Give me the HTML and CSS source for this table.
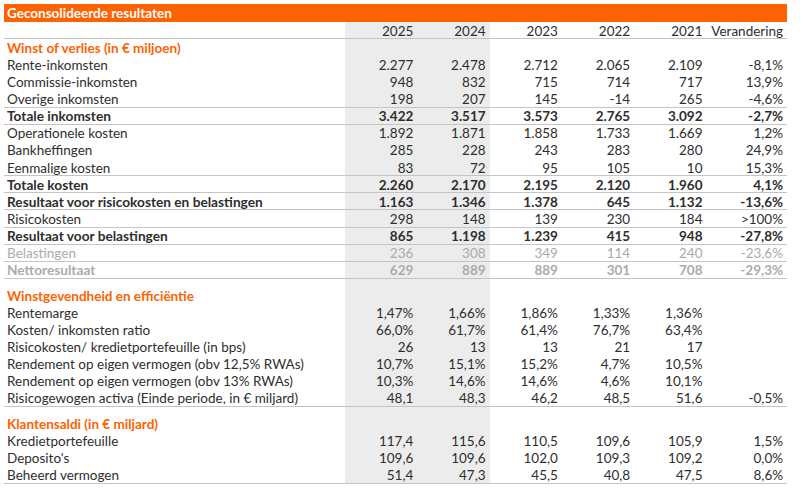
FILE: index.html
```html
<!DOCTYPE html>
<html lang="nl">
<head>
<meta charset="utf-8">
<title>Geconsolideerde resultaten</title>
<link rel="stylesheet" href="styles.css">
</head>
<body>
<div class="page">
<table class="results">
  <colgroup>
    <col class="c-label">
    <col class="c-num"><col class="c-num"><col class="c-num"><col class="c-num"><col class="c-num">
    <col class="c-chg">
  </colgroup>
  <thead>
    <tr class="title-row"><th colspan="7">Geconsolideerde resultaten</th></tr>
    <tr class="year-row line">
      <th></th><th class="hl">2025</th><th class="hl">2024</th><th>2023</th><th>2022</th><th>2021</th><th>Verandering</th>
    </tr>
  </thead>
  <tbody>
    <tr class="section"><td>Winst of verlies (in € miljoen)</td><td class="hl"></td><td class="hl"></td><td></td><td></td><td></td><td></td></tr>
    <tr><td>Rente-inkomsten</td><td class="hl">2.277</td><td class="hl">2.478</td><td>2.712</td><td>2.065</td><td>2.109</td><td>-8,1%</td></tr>
    <tr><td>Commissie-inkomsten</td><td class="hl">948</td><td class="hl">832</td><td>715</td><td>714</td><td>717</td><td>13,9%</td></tr>
    <tr class="line"><td>Overige inkomsten</td><td class="hl">198</td><td class="hl">207</td><td>145</td><td>-14</td><td>265</td><td>-4,6%</td></tr>
    <tr class="line total"><td>Totale inkomsten</td><td class="hl">3.422</td><td class="hl">3.517</td><td>3.573</td><td>2.765</td><td>3.092</td><td>-2,7%</td></tr>
    <tr><td>Operationele kosten</td><td class="hl">1.892</td><td class="hl">1.871</td><td>1.858</td><td>1.733</td><td>1.669</td><td>1,2%</td></tr>
    <tr><td>Bankheffingen</td><td class="hl">285</td><td class="hl">228</td><td>243</td><td>283</td><td>280</td><td>24,9%</td></tr>
    <tr class="line"><td>Eenmalige kosten</td><td class="hl">83</td><td class="hl">72</td><td>95</td><td>105</td><td>10</td><td>15,3%</td></tr>
    <tr class="line total"><td>Totale kosten</td><td class="hl">2.260</td><td class="hl">2.170</td><td>2.195</td><td>2.120</td><td>1.960</td><td>4,1%</td></tr>
    <tr class="line total"><td>Resultaat voor risicokosten en belastingen</td><td class="hl">1.163</td><td class="hl">1.346</td><td>1.378</td><td>645</td><td>1.132</td><td>-13,6%</td></tr>
    <tr class="line"><td>Risicokosten</td><td class="hl">298</td><td class="hl">148</td><td>139</td><td>230</td><td>184</td><td>&gt;100%</td></tr>
    <tr class="line total"><td>Resultaat voor belastingen</td><td class="hl">865</td><td class="hl">1.198</td><td>1.239</td><td>415</td><td>948</td><td>-27,8%</td></tr>
    <tr class="line muted"><td>Belastingen</td><td class="hl">236</td><td class="hl">308</td><td>349</td><td>114</td><td>240</td><td>-23,6%</td></tr>
    <tr class="line muted total"><td>Nettoresultaat</td><td class="hl">629</td><td class="hl">889</td><td>889</td><td>301</td><td>708</td><td>-29,3%</td></tr>
    <tr class="gap"><td></td><td class="hl"></td><td class="hl"></td><td></td><td></td><td></td><td></td></tr>
    <tr class="section"><td>Winstgevendheid en efficiëntie</td><td class="hl"></td><td class="hl"></td><td></td><td></td><td></td><td></td></tr>
    <tr><td>Rentemarge</td><td class="hl">1,47%</td><td class="hl">1,66%</td><td>1,86%</td><td>1,33%</td><td>1,36%</td><td></td></tr>
    <tr><td>Kosten/ inkomsten ratio</td><td class="hl">66,0%</td><td class="hl">61,7%</td><td>61,4%</td><td>76,7%</td><td>63,4%</td><td></td></tr>
    <tr><td>Risicokosten/ kredietportefeuille (in bps)</td><td class="hl">26</td><td class="hl">13</td><td>13</td><td>21</td><td>17</td><td></td></tr>
    <tr><td>Rendement op eigen vermogen (obv 12,5% RWAs)</td><td class="hl">10,7%</td><td class="hl">15,1%</td><td>15,2%</td><td>4,7%</td><td>10,5%</td><td></td></tr>
    <tr><td>Rendement op eigen vermogen (obv 13% RWAs)</td><td class="hl">10,3%</td><td class="hl">14,6%</td><td>14,6%</td><td>4,6%</td><td>10,1%</td><td></td></tr>
    <tr class="line"><td>Risicogewogen activa (Einde periode, in € miljard)</td><td class="hl">48,1</td><td class="hl">48,3</td><td>46,2</td><td>48,5</td><td>51,6</td><td>-0,5%</td></tr>
    <tr class="gap"><td></td><td class="hl"></td><td class="hl"></td><td></td><td></td><td></td><td></td></tr>
    <tr class="section"><td>Klantensaldi (in € miljard)</td><td class="hl"></td><td class="hl"></td><td></td><td></td><td></td><td></td></tr>
    <tr><td>Kredietportefeuille</td><td class="hl">117,4</td><td class="hl">115,6</td><td>110,5</td><td>109,6</td><td>105,9</td><td>1,5%</td></tr>
    <tr><td>Deposito's</td><td class="hl">109,6</td><td class="hl">109,6</td><td>102,0</td><td>109,3</td><td>109,2</td><td>0,0%</td></tr>
    <tr class="line"><td>Beheerd vermogen</td><td class="hl">51,4</td><td class="hl">47,3</td><td>45,5</td><td>40,8</td><td>47,5</td><td>8,6%</td></tr>
  </tbody>
</table>
</div>
</body>
</html>
```

FILE: styles.css
```css
html, body {
  margin: 0;
  padding: 0;
  background: #ffffff;
}

.page {
  padding: 4px 0 0 4px;
}

.results {
  width: 783px;
  table-layout: fixed;
  border-collapse: separate;
  border-spacing: 0;
  font-family: Lato, "Open Sans", sans-serif;
  font-size: 13.5px;
  color: #2e2e2e;
}

.c-label { width: 341px; }
.c-num { width: 72.3px; }
.c-chg { width: 80.5px; }

.results th,
.results td {
  padding: 0 4px 0 0;
  line-height: 16px;
  height: 17.15px;
  text-align: right;
  font-weight: normal;
  white-space: nowrap;
  overflow: visible;
}

.results th:first-child,
.results td:first-child {
  text-align: left;
  padding-left: 3px;
}

.title-row th {
  background: #ff6200;
  color: #ffffff;
  font-weight: bold;
  height: 18px;
  line-height: 18px;
  text-align: left;
  padding-left: 3px;
}

.year-row th {
  height: 17px;
}

.hl {
  background: #ececec;
}

.line th,
.line td {
  box-shadow: inset 0 -1px 0 #c4c4c4;
}

.total td {
  font-weight: bold;
}

.results .total td:first-child {
  font-size: 13.7px;
}

.muted td {
  color: #ababab;
}

.section td:first-child {
  color: #ff6200;
  font-weight: bold;
}

.gap td {
  height: 8px;
  line-height: 8px;
}
```
